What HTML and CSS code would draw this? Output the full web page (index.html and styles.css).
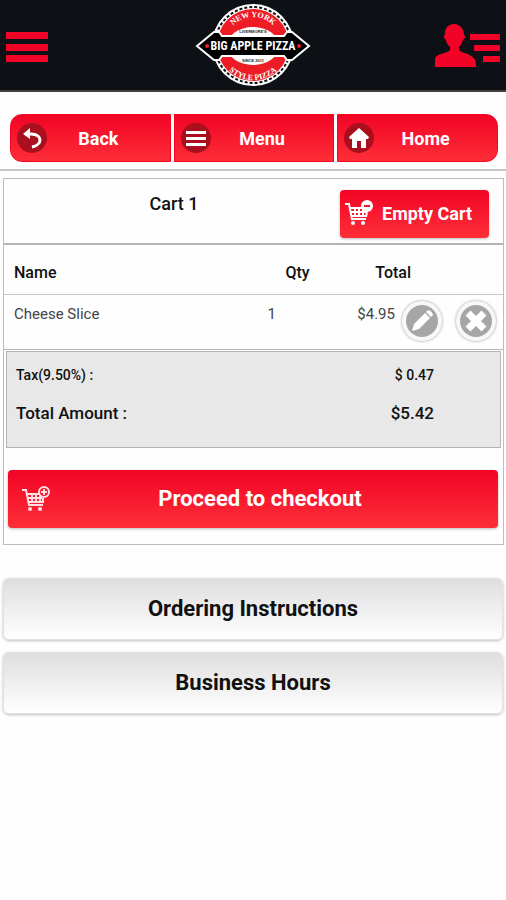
FILE: index.html
```
<!DOCTYPE HTML>
<html lang="en">
<head>
    <meta charset="utf-8">
    <meta name="viewport" content="width=device-width, initial-scale=1">
    <title>Big Apple Pizza - Cart</title>
    <link rel="stylesheet" href="styles.css">
</head>
<body>
<header class="top-bar">
    <button class="menu-toggle" type="button" aria-label="Menu">
        <svg width="42" height="30" viewBox="0 0 42 30">
            <path d="M0 0h42v7H0zM0 12h42v7H0zM0 23h42v7H0z"/>
        </svg>
    </button>
    <a class="logo" href="#" aria-label="Big Apple Pizza">
        <svg width="116" height="84" viewBox="0 0 116 84">
            <defs>
                <path id="arc-top" d="M30 42a28 28 0 0 1 56 0"/>
                <path id="arc-bottom" d="M23 42a35 35 0 0 0 70 0"/>
            </defs>
            <circle cx="58" cy="42" r="41" fill="#fff"/>
            <circle cx="58" cy="42" r="38" fill="none" stroke="#111" stroke-width="2" stroke-dasharray="3 2"/>
            <circle cx="58" cy="42" r="36" fill="#ee1c24"/>
            <ellipse cx="58" cy="43" rx="26" ry="19" fill="#fff"/>
            <path d="M2 43L19 29h5l3 4h62l3-4h5l17 14-17 14h-5l-3-4H27l-3 4h-5z" fill="#000" stroke="#fff" stroke-width="2"/>
            <circle cx="12" cy="43" r="2" fill="#ee1c24"/>
            <circle cx="104" cy="43" r="2" fill="#ee1c24"/>
            <text class="logo-arc" text-anchor="middle"><textPath href="#arc-top" startOffset="50%">NEW YORK</textPath></text>
            <text class="logo-arc" text-anchor="middle"><textPath href="#arc-bottom" startOffset="50%">STYLE PIZZA</textPath></text>
            <text class="logo-small" x="58" y="30" text-anchor="middle">LIVERMORE'S</text>
            <text class="logo-small" x="58" y="59" text-anchor="middle">SINCE 2011</text>
            <text class="logo-name" x="58" y="47" text-anchor="middle">BIG APPLE PIZZA</text>
        </svg>
    </a>
    <button class="account-toggle" type="button" aria-label="Account">
        <svg width="65" height="43" viewBox="0 0 65 43">
            <path d="M19 0c6 0 10 5 10 11 2 0 1 4-1 5-1 3-2 5-4 7v3c4 4 17 4 17 14v3H0v-7c0-7 12-6 15-10v-3c-2-2-4-4-4-7-2-1-3-5-1-5C9 5 13 0 19 0z"/>
            <path d="M35 10h30v6H35zM39 21h26v6H39zM48 32h17v6H48z"/>
        </svg>
    </button>
</header>

<nav class="nav-buttons">
    <a class="nav-button" href="#">
        <svg width="30" height="30" viewBox="0 0 30 30">
            <circle cx="15" cy="15" r="15" fill="#a90f1c"/>
            <path d="M10 11h4c6 0 9 3 9 6s-3 6-8 7" fill="none" stroke="#fff" stroke-width="3"/>
            <path d="M6 11l7-6v11z" fill="#fff"/>
        </svg>
        <span>Back</span>
    </a>
    <a class="nav-button" href="#">
        <svg width="30" height="30" viewBox="0 0 30 30">
            <circle cx="15" cy="15" r="15" fill="#a90f1c"/>
            <path d="M5 8h20v3H5zM5 14h20v3H5zM5 20h20v3H5z" fill="#fff"/>
        </svg>
        <span>Menu</span>
    </a>
    <a class="nav-button" href="#">
        <svg width="30" height="30" viewBox="0 0 30 30">
            <circle cx="15" cy="15" r="15" fill="#a90f1c"/>
            <path d="M15 5l10 9-1 2h-2v9h-5v-7h-4v7H8v-9H6l-1-2z" fill="#fff"/>
        </svg>
        <span>Home</span>
    </a>
</nav>

<main class="cart">
    <div class="cart-head">
        <h1>Cart 1</h1>
        <button class="red-button empty-cart" type="button">
            <svg width="28" height="26" viewBox="0 0 28 26">
                <path d="M0 4h4l3 15h14M5 8h14M6 12h16M7 16h14M10 8v8M14 8v8M18 8v8M22 12l-1 5" fill="none" stroke="#fff" stroke-width="2"/>
                <circle cx="8" cy="23" r="2" fill="#fff"/>
                <circle cx="18" cy="23" r="2" fill="#fff"/>
                <circle cx="22" cy="6" r="6" fill="#fff"/>
                <path d="M19 6h6" stroke="#f01428" stroke-width="2"/>
            </svg>
            <span>Empty Cart</span>
        </button>
    </div>

    <table class="items">
        <thead>
            <tr>
                <th class="col-name">Name</th>
                <th class="col-qty">Qty</th>
                <th class="col-total">Total</th>
                <th class="col-actions"></th>
            </tr>
        </thead>
        <tbody>
            <tr>
                <td>Cheese Slice</td>
                <td>1</td>
                <td>$4.95</td>
                <td>
                    <div class="actions">
                        <button class="round-button" type="button" aria-label="Edit">
                            <svg width="32" height="32" viewBox="0 0 32 32">
                                <circle cx="16" cy="16" r="16" fill="#a6a6a6"/>
                                <path d="M6 26l2-7L19 8l5 5-11 11zM20 7l2-2c2 0 5 3 5 5l-2 2z" fill="#fff"/>
                            </svg>
                        </button>
                        <button class="round-button" type="button" aria-label="Remove">
                            <svg width="32" height="32" viewBox="0 0 32 32">
                                <circle cx="16" cy="16" r="16" fill="#a6a6a6"/>
                                <path d="M8 8l16 16M24 8L8 24" stroke="#fff" stroke-width="7"/>
                            </svg>
                        </button>
                    </div>
                </td>
            </tr>
        </tbody>
    </table>

    <dl class="totals">
        <div class="tax">
            <dt>Tax(9.50%) :</dt>
            <dd>$ 0.47</dd>
        </div>
        <div class="amount">
            <dt>Total Amount :</dt>
            <dd>$5.42</dd>
        </div>
    </dl>

    <button class="red-button checkout" type="button">
        <svg width="28" height="26" viewBox="0 0 28 26">
            <path d="M0 4h4l3 15h14M5 8h12M6 12h14M7 16h14M10 8v8M14 8v8M18 10v6M21 12v5" fill="none" stroke="#ffdfe2" stroke-width="2"/>
            <circle cx="8" cy="23" r="2" fill="#ffdfe2"/>
            <circle cx="18" cy="23" r="2" fill="#ffdfe2"/>
            <circle cx="22" cy="6" r="5" fill="#f01428" stroke="#ffdfe2" stroke-width="2"/>
            <path d="M19 6h6M22 3v6" stroke="#ffdfe2" stroke-width="2"/>
        </svg>
        <span>Proceed to checkout</span>
    </button>
</main>

<div class="info">
    <button class="info-button" type="button">Ordering Instructions</button>
    <button class="info-button" type="button">Business Hours</button>
</div>
</body>
</html>
```
FILE: styles.css
```
* {
    box-sizing: border-box;
}

body {
    margin: 0;
    background-color: #fefefe;
    color: #111111;
    font-family: Roboto, "Liberation Sans", sans-serif;
}

button {
    border: none;
    padding: 0;
    background: transparent;
    color: inherit;
    font-family: inherit;
}

svg {
    display: block;
    flex: none;
}

.top-bar {
    display: grid;
    grid-template-columns: 1fr auto 1fr;
    align-items: center;
    height: 92px;
    padding: 0 6px;
    background-color: #0d1115;
    border-bottom: 2px solid #44413f;
    fill: #f00326;
}

.account-toggle {
    justify-self: end;
}

.menu-toggle {
    justify-self: start;
    padding-top: 4px;
}

.logo-name {
    font: bold 12px "Liberation Sans Narrow", "Roboto Condensed", "Liberation Sans", sans-serif;
    fill: #ffffff;
}

.logo-arc {
    font: bold 8px "Liberation Serif", serif;
    fill: #ffffff;
}

.logo-small {
    font: bold 4px "Liberation Sans", sans-serif;
    fill: #222222;
}

/* Back / Menu / Home */
.nav-buttons {
    display: flex;
    gap: 3px;
    padding: 22px 8px 7px 10px;
    border-bottom: 2px solid #c8c8c8;
}

.nav-button {
    display: flex;
    flex: 1;
    align-items: center;
    height: 48px;
    padding: 0 20px 0 6px;
    border: 1px solid #f5061f;
    background: linear-gradient(#f20425, #fe2e38);
    color: #ffffff;
    font-size: 18px;
    font-weight: 700;
    text-align: center;
    text-decoration: none;
}

.nav-button span {
    flex: 1;
}

.nav-button:first-child {
    border-radius: 12px 0 0 12px;
}

.nav-button:last-child {
    border-radius: 0 12px 12px 0;
}

.cart {
    margin: 7px 2px 0 3px;
    padding-bottom: 16px;
    border: 1px solid #bdbdbd;
}

.cart-head {
    display: flex;
    height: 66px;
    padding: 11px 14px 0 0;
    border-bottom: 2px solid #b4b4b4;
}

.cart-head h1 {
    flex: 1;
    margin: 3px 0 0;
    padding-left: 4px;
    font-size: 18px;
    font-weight: 500;
    line-height: 22px;
    text-align: center;
}

.red-button {
    display: flex;
    align-items: center;
    border-radius: 4px;
    background: linear-gradient(#f20425, #fe2e38);
    box-shadow: 0 1px 3px #b8b8b8;
    color: #ffffff;
    font-weight: 700;
}

.red-button span {
    flex: 1;
}

.empty-cart {
    width: 149px;
    height: 48px;
    padding: 0 8px 2px 5px;
    font-size: 18px;
}

.items {
    width: 100%;
    border-collapse: collapse;
    table-layout: fixed;
    text-align: left;
}

.items th {
    height: 49px;
    padding: 6px 0 0 22px;
    font-size: 16px;
    font-weight: 500;
}

.items td {
    height: 55px;
    padding: 10px 0 0 4px;
    border-top: 1px solid #c8c8c8;
    border-bottom: 1px solid #b4b4b4;
    color: #444444;
    font-size: 15px;
    font-weight: 400;
    line-height: 18px;
    vertical-align: top;
}

.items th:first-child,
.items td:first-child {
    padding-left: 10px;
}

.items td:last-child {
    padding: 6px 7px 0 0;
}

.col-name {
    width: 52%;
}

.col-qty {
    width: 18%;
}

.col-total {
    width: 9%;
}

.actions {
    display: flex;
    justify-content: flex-end;
    gap: 14px;
}

.round-button {
    padding: 4px;
    border-radius: 50%;
    background-color: #f8f8f8;
    box-shadow: 0 0 3px #9a9a9a;
}

.totals {
    height: 97px;
    margin: 1px 2px 0;
    padding: 10px 66px 0 9px;
    border: 1px solid #b4b4b4;
    background-color: #e8e8e8;
    font-weight: 500;
}

.totals div {
    display: flex;
    justify-content: space-between;
}

.totals dd {
    margin: 0;
}

.tax {
    font-size: 14px;
    line-height: 26px;
}

.amount {
    padding-top: 12px;
    font-size: 17px;
    line-height: 26px;
}

.checkout {
    width: calc(100% - 9px);
    height: 58px;
    margin: 22px 5px 0 4px;
    padding: 0 28px 0 14px;
    font-size: 22px;
}

.info {
    display: flex;
    flex-direction: column;
    gap: 12px;
    padding: 33px 3px 12px;
}

.info-button {
    height: 62px;
    border: 1px solid #e2e2e2;
    border-radius: 6px;
    background: linear-gradient(#dedede, #ffffff);
    box-shadow: 0 1px 3px #bdbdbd;
    font-size: 22px;
    font-weight: 700;
}
```
